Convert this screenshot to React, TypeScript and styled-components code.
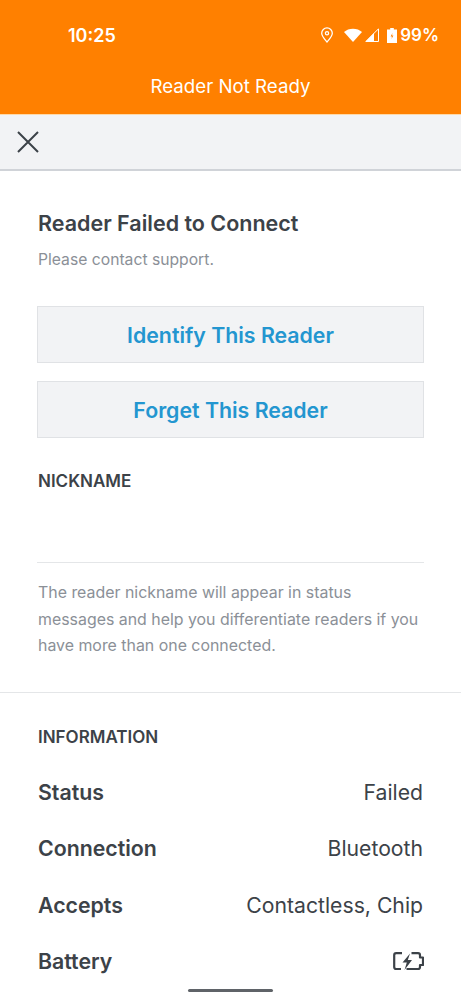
import styled, { createGlobalStyle } from "styled-components";

const GlobalStyle = createGlobalStyle`
  html, body {
    margin: 0;
    padding: 0;
    background: #ffffff;
    font-family: "Inter", "Liberation Sans", sans-serif;
  }
`;

const Screen = styled.div`
  position: relative;
  width: 461px;
  height: 999px;
  overflow: hidden;
  background: #ffffff;
  color: #3c4248;
`;

const OrangeHeader = styled.header`
  height: 115px;
  background: #ff8000;
  color: #ffffff;
  box-sizing: border-box;
  border-bottom: 1px solid #ffd9a8;
`;

const StatusBar = styled.div`
  display: flex;
  align-items: center;
  justify-content: space-between;
  height: 70px;
  padding: 0 22px 0 68px;
`;

const Clock = styled.span`
  font-size: 18px;
  font-weight: 600;
`;

const StatusIcons = styled.div`
  display: flex;
  align-items: center;
`;

const Percent = styled.span`
  margin-left: 3px;
  font-size: 17px;
  font-weight: 600;
`;

const HeaderTitle = styled.div`
  text-align: center;
  font-size: 18.7px;
  line-height: 34px;
`;

const Toolbar = styled.div`
  display: flex;
  align-items: center;
  height: 56px;
  padding-left: 16px;
  box-sizing: border-box;
  background: #f2f3f5;
  border-bottom: 2px solid #d0d3d8;
`;

const Content = styled.main`
  padding: 38px 37px 0;
`;

const Heading = styled.h1`
  margin: 0;
  padding-left: 1px;
  font-size: 21.5px;
  line-height: 28px;
  font-weight: 600;
`;

const Hint = styled.p`
  margin: 12px 0 35px;
  padding-left: 1px;
  font-size: 15.7px;
  line-height: 22px;
  color: #8b9097;
`;

const ActionButton = styled.button`
  display: block;
  width: 100%;
  height: 57px;
  margin-bottom: 18px;
  padding: 0;
  background: #f2f3f5;
  border: 1px solid #e0e2e5;
  color: #2396d0;
  font-family: inherit;
  font-size: 21.3px;
  font-weight: 600;
`;

const SectionLabel = styled.h2`
  margin: 0;
  padding-left: 1px;
  font-size: 17px;
  line-height: 24px;
  font-weight: 600;
`;

const NicknameLabel = styled(SectionLabel)`
  margin-top: 31px;
`;

const NicknameField = styled.div`
  height: 69px;
  border-bottom: 1px solid #e4e6e8;
`;

const HelpText = styled.p`
  margin: 17px 0 0;
  padding-left: 1px;
  font-size: 15.9px;
  line-height: 26.5px;
  color: #8b9097;
`;

const Divider = styled.hr`
  margin: 32px 0 0;
  border: 0;
  border-top: 1px solid #e4e6e8;
`;

const InfoSection = styled.section`
  padding: 32px 37px 0;
`;

const InfoList = styled.div`
  margin-top: 15px;
`;

const InfoRow = styled.div`
  display: flex;
  align-items: center;
  justify-content: space-between;
  height: 56.5px;
  padding-left: 1px;
`;

const InfoLabel = styled.span`
  font-size: 21.3px;
  font-weight: 600;
`;

const InfoValue = styled.span`
  margin-right: 1px;
  font-size: 21.2px;
`;

const HomeIndicator = styled.div`
  position: absolute;
  left: 188px;
  bottom: 7px;
  width: 85px;
  height: 3px;
  border-radius: 2px;
  background: #5f6368;
`;

const CloseIcon = () => (
  <svg width="24" height="24" viewBox="0 0 24 24" fill="none" stroke="#3c4248" strokeWidth="2">
    <path d="M2 2 L22 22 M22 2 L2 22" />
  </svg>
);

const PinIcon = () => (
  <svg width="14" height="16" viewBox="0 0 14 16" fill="none" stroke="#fff" strokeWidth="1.3">
    <path d="M7 15 C4 11.5 1.7 9 1.7 6.2 A5.3 5.3 0 0 1 12.3 6.2 C12.3 9 10 11.5 7 15 Z" />
    <circle cx="7" cy="6.2" r="1.6" />
  </svg>
);

const WifiIcon = () => (
  <svg width="18" height="14" viewBox="0 0 18 14" fill="#fff" style={{ marginLeft: 10 }}>
    <path d="M0 4 C4.5 -0.5 13.5 -0.5 18 4 L9 14 Z" />
  </svg>
);

const SignalIcon = () => (
  <svg width="14" height="14" viewBox="0 0 14 14" style={{ marginLeft: 3 }}>
    <path d="M13.5 0.8 V13.5 H0.8 Z" fill="none" stroke="#fff" strokeWidth="1" />
    <path d="M9 5 V13.5 H0.8 Z" fill="#fff" />
  </svg>
);

const BatteryIcon = () => (
  <svg width="10" height="15" viewBox="0 0 10 15" style={{ marginLeft: 8 }}>
    <path d="M3.2 0 H6.8 V1.5 H10 V15 H0 V1.5 H3.2 Z" fill="#fff" />
    <path d="M5.5 5 L3.6 8.5 H5 L4.5 11 L6.4 7.5 H5 Z" fill="#ff8000" />
  </svg>
);

const ChargingIcon = () => (
  <svg width="31" height="19" viewBox="0 0 31 19" fill="none">
    <path
      d="M9 1.2 H3.2 Q1.2 1.2 1.2 3.2 V15 Q1.2 17 3.2 17 H8 M18.5 1.2 H25 Q27 1.2 27 3.2 V5.5 H30 V13 H27 V15 Q27 17 25 17 H13.5"
      stroke="#3c4248"
      strokeWidth="2.2"
      strokeLinejoin="round"
    />
    <path d="M17 1.5 L9.5 10.5 H13.8 L11.5 18 L19 8 H14.8 Z" fill="#3c4248" />
  </svg>
);

const info = [
  ["Status", "Failed"],
  ["Connection", "Bluetooth"],
  ["Accepts", "Contactless, Chip"],
];

export default function App() {
  return (
    <Screen>
      <GlobalStyle />
      <OrangeHeader>
        <StatusBar>
          <Clock>10:25</Clock>
          <StatusIcons>
            <PinIcon />
            <WifiIcon />
            <SignalIcon />
            <BatteryIcon />
            <Percent>99%</Percent>
          </StatusIcons>
        </StatusBar>
        <HeaderTitle>Reader Not Ready</HeaderTitle>
      </OrangeHeader>
      <Toolbar>
        <CloseIcon />
      </Toolbar>
      <Content>
        <Heading>Reader Failed to Connect</Heading>
        <Hint>Please contact support.</Hint>
        <ActionButton>Identify This Reader</ActionButton>
        <ActionButton>Forget This Reader</ActionButton>
        <NicknameLabel>NICKNAME</NicknameLabel>
        <NicknameField />
        <HelpText>
          The reader nickname will appear in status messages and help you differentiate readers if you have more than one connected.
        </HelpText>
      </Content>
      <Divider />
      <InfoSection>
        <SectionLabel>INFORMATION</SectionLabel>
        <InfoList>
          {info.map(([label, value]) => (
            <InfoRow key={label}>
              <InfoLabel>{label}</InfoLabel>
              <InfoValue>{value}</InfoValue>
            </InfoRow>
          ))}
          <InfoRow>
            <InfoLabel>Battery</InfoLabel>
            <ChargingIcon />
          </InfoRow>
        </InfoList>
      </InfoSection>
      <HomeIndicator />
    </Screen>
  );
}
